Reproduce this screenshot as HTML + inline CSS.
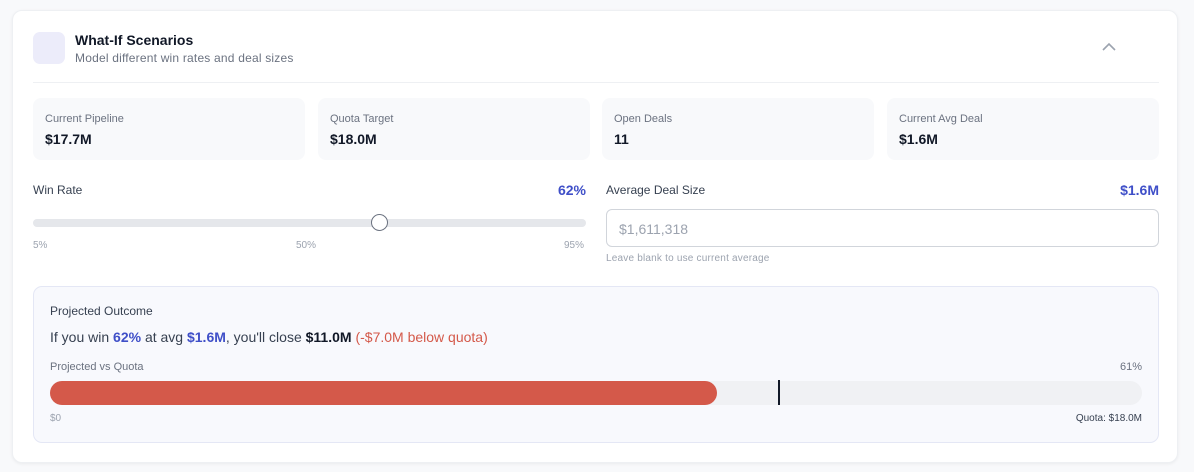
<!DOCTYPE html>
<html><head><style>
*{box-sizing:border-box;margin:0;padding:0}
body{width:1194px;height:472px;background:#f8f9fb;font-family:"Liberation Sans",sans-serif;position:relative;overflow:hidden;color:#111827}
.a{position:absolute}
.card{left:12px;top:10px;width:1166px;height:453px;background:#fff;border-radius:10px;box-shadow:0 1px 3px rgba(0,0,0,.06);border:1px solid #eef0f3}
.stat{top:98px;height:62px;background:#f8f9fb;border-radius:8px;width:272px}
.stat .l{position:absolute;left:12px;top:15px;font-size:11px;color:#6b7280}
.stat .v{position:absolute;left:12px;top:33px;font-size:14px;font-weight:bold;color:#111827}
.s{font-size:10px;color:#9ca3af}
.blue{color:#3f4fc8;font-weight:bold}
</style></head><body>
<div class="a card"></div>
<div class="a" style="left:33px;top:32px;width:32px;height:32px;border-radius:7px;background:#ececfa"></div>
<div class="a" style="left:75px;top:32px;font-size:14px;font-weight:bold;color:#111827">What-If Scenarios</div>
<div class="a" style="left:75px;top:51px;font-size:12px;color:#6b7280;letter-spacing:0.2px">Model different win rates and deal sizes</div>
<svg class="a" style="left:1101px;top:42px" width="16" height="10" viewBox="0 0 16 10"><path d="M2 8L8 2L14 8" fill="none" stroke="#9ca3af" stroke-width="1.6"/></svg>
<div class="a" style="left:33px;top:82px;width:1126px;height:1px;background:#eef0f3"></div>
<div class="a stat" style="left:33px"><div class="l">Current Pipeline</div><div class="v">$17.7M</div></div>
<div class="a stat" style="left:318px"><div class="l">Quota Target</div><div class="v">$18.0M</div></div>
<div class="a stat" style="left:602px"><div class="l">Open Deals</div><div class="v">11</div></div>
<div class="a stat" style="left:887px"><div class="l">Current Avg Deal</div><div class="v">$1.6M</div></div>
<div class="a" style="left:33px;top:183px;font-size:12px;color:#374151">Win Rate</div>
<div class="a blue" style="right:608px;top:182px;font-size:14px">62%</div>
<div class="a" style="left:33px;top:219px;width:553px;height:8px;border-radius:4px;background:#e5e7eb"></div>
<div class="a" style="left:371px;top:214px;width:17px;height:17px;border-radius:50%;background:#fff;border:1px solid #6b7280"></div>
<div class="a s" style="left:33px;top:240px">5%</div>
<div class="a s" style="left:296px;top:240px">50%</div>
<div class="a s" style="left:564px;top:240px">95%</div>
<div class="a" style="left:606px;top:183px;font-size:12px;color:#374151">Average Deal Size</div>
<div class="a blue" style="right:35px;top:182px;font-size:14px">$1.6M</div>
<div class="a" style="left:606px;top:209px;width:553px;height:38px;border:1px solid #d1d5db;border-radius:6px;font-size:14px;color:#9ca3af;padding:11px 12px">$1,611,318</div>
<div class="a s" style="left:606px;top:253px;letter-spacing:0.2px">Leave blank to use current average</div>
<div class="a" style="left:33px;top:286px;width:1126px;height:157px;background:#f8f9fd;border:1px solid #e4e7f5;border-radius:9px"></div>
<div class="a" style="left:50px;top:304px;font-size:12px;color:#374151">Projected Outcome</div>
<div class="a" style="left:50px;top:329px;font-size:14px;color:#374151">If you win <span class="blue">62%</span> at avg <span class="blue">$1.6M</span>, you'll close <b style="color:#111827">$11.0M</b> <span style="color:#d4594a">(-$7.0M below quota)</span></div>
<div class="a" style="left:50px;top:361px;font-size:11px;color:#6b7280">Projected vs Quota</div>
<div class="a" style="right:52px;top:361px;font-size:11px;color:#6b7280">61%</div>
<div class="a" style="left:50px;top:381px;width:1092px;height:24px;border-radius:12px;background:#f0f1f4"></div>
<div class="a" style="left:50px;top:381px;width:667px;height:24px;border-radius:12px;background:#d4594a"></div>
<div class="a" style="left:778px;top:380px;width:2px;height:25px;background:#111827"></div>
<div class="a s" style="left:50px;top:413px">$0</div>
<div class="a" style="right:52px;top:413px;font-size:10px;color:#374151">Quota: $18.0M</div>
</body></html>
